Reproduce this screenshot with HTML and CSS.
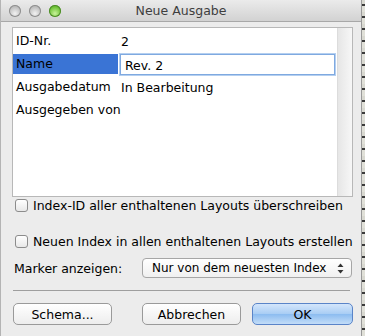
FILE: index.html
```html
<!DOCTYPE html>
<html lang="de">
<head>
    <meta charset="UTF-8">
    <title>Neue Ausgabe</title>
    <link rel="stylesheet" href="styles.css">
</head>
<body>

    <div class="window">
        <!-- Title bar -->
        <div class="titlebar">
            <div class="lights">
                <span class="light"></span>
                <span class="light"></span>
                <span class="light green"></span>
            </div>
            <div class="title">Neue Ausgabe</div>
        </div>

        <div class="content">
            <!-- Property table -->
            <div class="table-box">
                <div class="rows">
                    <div class="row"><span class="key">ID-Nr.</span><span class="val">2</span></div>
                    <div class="row edit"><span class="key selected">Name</span><span class="field">Rev. 2</span></div>
                    <div class="row"><span class="key">Ausgabedatum</span><span class="val">In Bearbeitung</span></div>
                    <div class="row"><span class="key">Ausgegeben von</span><span class="val"></span></div>
                </div>
                <div class="scroller"></div>
            </div>

            <label class="check first"><span class="box"></span>Index-ID aller enthaltenen Layouts überschreiben</label>
            <label class="check"><span class="box"></span>Neuen Index in allen enthaltenen Layouts erstellen</label>

            <div class="marker">
                <span class="marker-label">Marker anzeigen:</span>
                <div class="popup">
                    <span>Nur von dem neuesten Index</span>
                    <svg class="arrows" width="7" height="11" viewBox="0 0 7 11">
                        <path d="M0.5 4 L3.5 0.5 L6.5 4 Z" fill="#333"/>
                        <path d="M0.5 7 L3.5 10.5 L6.5 7 Z" fill="#333"/>
                    </svg>
                </div>
            </div>

            <div class="separator"></div>

            <div class="buttons">
                <button class="btn schema">Schema...</button>
                <div class="right-buttons">
                    <button class="btn">Abbrechen</button>
                    <button class="btn default">OK</button>
                </div>
            </div>
        </div>
    </div>
    <div class="desktop"></div>

</body>
</html>
```

FILE: styles.css
```css
body {
    margin: 0;
    width: 365px;
    height: 336px;
    display: flex;
    overflow: hidden;
    font-family: "DejaVu Sans", "Lucida Grande", sans-serif;
    font-size: 12.5px;
    color: #000;
    background: #8a8a8a;
}
.window {
    width: 362px;
    height: 336px;
    background: #ececec;
    border-right: 1px solid #9a9a9a;
    border-left: 1px solid #b4b4b4;
    box-sizing: border-box;
}
.desktop {
    flex: 1;
    background: repeating-linear-gradient(#d8d8d0 0 4px, #3a3a3a 4px 6px, #e0e0d8 6px 12px);
}
.titlebar {
    height: 22px;
    background: linear-gradient(#ebebeb, #d2d2d2);
    border-bottom: 1px solid #a8a8a8;
    box-sizing: border-box;
    display: flex;
    align-items: center;
    position: relative;
}
.lights {
    display: flex;
    gap: 8px;
    padding-left: 8px;
}
.light {
    width: 12px;
    height: 12px;
    border-radius: 50%;
    background: radial-gradient(circle at 50% 70%, #f2f2f2, #b8b8b8 70%, #9a9a9a);
    box-shadow: inset 0 0 0 1px #8e8e8e;
}
.light.green {
    background: radial-gradient(circle at 50% 70%, #c8f39a, #71c43a 60%, #3f8a1c);
    box-shadow: inset 0 0 0 1px #4d8a2a;
}
.title {
    position: absolute;
    left: 0;
    right: 0;
    text-align: center;
    font-size: 12.5px;
    color: #3e3e3e;
}
.content {
    padding: 5px 8px 0 11px;
}
.table-box {
    height: 170px;
    border: 1px solid #b8b8b8;
    background: #fff;
    display: flex;
    box-sizing: border-box;
}
.rows {
    flex: 1;
    padding-top: 3px;
}
.row {
    display: flex;
    height: 20px;
    align-items: center;
    margin-bottom: 3px;
}
.key {
    flex-shrink: 0;
    width: 102px;
    padding-left: 3px;
    height: 20px;
    line-height: 20px;
    white-space: nowrap;
}
.key.selected {
    background: #3a74d5;
    color: #000;
}
.val {
    padding-left: 3px;
}
.field {
    flex: 1;
    height: 21px;
    line-height: 21px;
    margin-left: 2px;
    padding-left: 4px;
    border: 1px solid #7fa9e0;
    box-shadow: 0 0 0 1px #b4cff0;
    box-sizing: border-box;
    background: #fff;
}
.scroller {
    width: 14px;
    margin-left: 2px;
    background: linear-gradient(to right, #e6e6e6, #f7f7f7);
    border-left: 1px solid #dcdcdc;
}
.check {
    display: flex;
    align-items: center;
    gap: 5px;
    padding-left: 3px;
    height: 16px;
    margin-top: 20px;
    white-space: nowrap;
}
.check.first {
    margin-top: 0;
}
.box {
    width: 13px;
    height: 13px;
    border: 1px solid #8c8c8c;
    border-radius: 3px;
    background: linear-gradient(#fff, #e8e8e8);
    box-sizing: border-box;
}
.marker {
    display: flex;
    align-items: center;
    margin-top: 9px;
    padding-left: 2px;
}
.marker-label {
    width: 128px;
}
.popup {
    width: 210px;
    height: 20px;
    border: 1px solid #a6a6a6;
    border-radius: 4px;
    background: linear-gradient(#ffffff, #f0f0f0);
    display: flex;
    align-items: center;
    justify-content: space-between;
    padding: 0 7px 0 9px;
    box-sizing: border-box;
    font-size: 12px;
}
.separator {
    height: 1px;
    background: #9e9e9e;
    margin: 12px 3px 0 1px;
}
.buttons {
    display: flex;
    justify-content: space-between;
    margin-top: 12px;
    padding-left: 1px;
}
.right-buttons {
    display: flex;
    gap: 11px;
}
.btn {
    font-family: inherit;
    font-size: 12.5px;
    width: 99px;
    height: 22px;
    border: 1px solid #9a9a9a;
    border-radius: 5px;
    background: linear-gradient(#ffffff, #ededed);
    color: #000;
    padding: 0;
}
.btn.default {
    width: 101px;
    border-color: #5a84c8;
    background: linear-gradient(#d4e6fb, #a8cdf4 50%, #8cbcf0 51%, #c3ddf8);
}
```
